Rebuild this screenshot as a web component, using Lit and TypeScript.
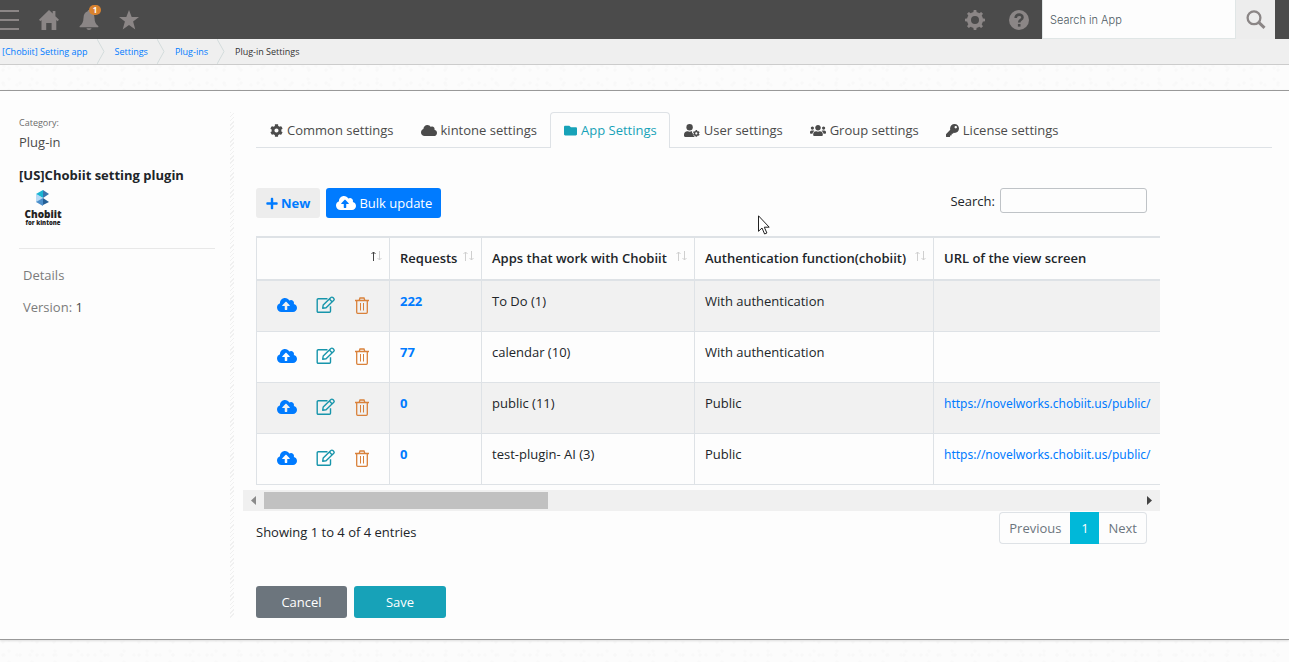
import { LitElement, html, css, svg } from "lit";
import { customElement, property, state } from "lit/decorators.js";
import { classMap } from "lit/directives/class-map.js";

const CLOUD =
  "M537.6 226.6c4.1-10.7 6.4-22.4 6.4-34.6 0-53-43-96-96-96-19.7 0-38.1 6-53.3 16.2C367 64.2 315.3 32 256 32c-88.4 0-160 71.6-160 160 0 2.7.1 5.4.2 8.1C40.2 219.8 0 273.2 0 336c0 79.5 64.5 144 144 144h368c70.7 0 128-57.3 128-128 0-61.9-44-113.6-102.4-125.4z";
const COG =
  "M487.4 315.7l-42.6-24.6c4.3-23.2 4.3-47 0-70.2l42.6-24.6c4.9-2.8 7.1-8.6 5.5-14-11.1-35.6-30-67.8-54.7-94.6-3.8-4.1-10-5.1-14.8-2.3L380.8 110c-17.9-15.4-38.5-27.3-60.8-35.1V25.8c0-5.6-3.9-10.5-9.4-11.7-36.7-8.2-74.3-7.8-109.2 0-5.5 1.2-9.4 6.1-9.4 11.7V75c-22.2 7.9-42.8 19.8-60.8 35.1L88.7 85.5c-4.9-2.8-11-1.9-14.8 2.3-24.7 26.7-43.6 58.9-54.7 94.6-1.7 5.4.6 11.2 5.5 14L67.3 221c-4.3 23.2-4.3 47 0 70.2l-42.6 24.6c-4.9 2.8-7.1 8.6-5.5 14 11.1 35.6 30 67.8 54.7 94.6 3.8 4.1 10 5.1 14.8 2.3l42.6-24.6c17.9 15.4 38.5 27.3 60.8 35.1v49.2c0 5.6 3.9 10.5 9.4 11.7 36.7 8.2 74.3 7.8 109.2 0 5.5-1.2 9.4-6.1 9.4-11.7v-49.2c22.2-7.9 42.8-19.8 60.8-35.1l42.6 24.6c4.9 2.8 11 1.9 14.8-2.3 24.7-26.7 43.6-58.9 54.7-94.6 1.5-5.5-.7-11.3-5.6-14.1zM256 336c-44.1 0-80-35.9-80-80s35.9-80 80-80 80 35.9 80 80-35.9 80-80 80z";

const ICONS: Record<string, { box: string; body: unknown }> = {
  cog: { box: "0 0 512 512", body: svg`<path d=${COG} />` },
  cloud: { box: "0 0 640 512", body: svg`<path d=${CLOUD} />` },
  upload: {
    box: "0 0 640 512",
    body: svg`<path fill-rule="evenodd" d=${
      CLOUD +
      "M393.4 288H328v112c0 8.8-7.2 16-16 16h-48c-8.8 0-16-7.2-16-16V288h-65.4c-14.3 0-21.4-17.2-11.3-27.3l105.4-105.4c6.2-6.2 16.4-6.2 22.6 0l105.4 105.4c10.1 10.1 2.9 27.3-11.3 27.3z"
    } />`,
  },
  folder: {
    box: "0 0 512 512",
    body: svg`<path d="M464 128H272l-64-64H48C21.49 64 0 85.49 0 112v288c0 26.51 21.49 48 48 48h416c26.51 0 48-21.49 48-48V176c0-26.51-21.49-48-48-48z" />`,
  },
  userCog: {
    box: "0 0 640 512",
    body: svg`<circle cx="224" cy="128" r="128" /><path d="M134 288C60 288 0 348 0 422v42c0 26 21 48 48 48h352c12 0 22-4 30-11-52-20-84-74-78-132-28-16-40-44-30-81h-25c-45 20-101 20-146 0z" /><g transform="translate(355 235) scale(.54)"><path d=${COG} /></g>`,
  },
  users: {
    box: "0 0 640 512",
    body: svg`<path d="M96 224c35.3 0 64-28.7 64-64s-28.7-64-64-64-64 28.7-64 64 28.7 64 64 64zm448 0c35.3 0 64-28.7 64-64s-28.7-64-64-64-64 28.7-64 64 28.7 64 64 64zm32 32h-64c-17.6 0-33.5 7.1-45.1 18.6 40.3 22.1 68.9 62 75.1 109.4h66c17.7 0 32-14.3 32-32v-32c0-35.3-28.7-64-64-64zm-256 0c61.9 0 112-50.1 112-112S381.9 32 320 32 208 82.1 208 144s50.1 112 112 112zm76.8 32h-8.3c-20.8 10-43.9 16-68.5 16s-47.6-6-68.5-16h-8.3C179.6 288 128 339.6 128 403.2V432c0 26.5 21.5 48 48 48h288c26.5 0 48-21.5 48-48v-28.8c0-63.6-51.6-115.2-115.2-115.2zm-223.7-13.4C161.5 263.1 145.6 256 128 256H64c-35.3 0-64 28.7-64 64v32c0 17.7 14.3 32 32 32h65.9c6.3-47.4 34.9-87.3 75.2-109.4z" />`,
  },
  key: {
    box: "0 0 512 512",
    body: svg`<path d="M512 176.001C512 273.203 433.202 352 336 352c-11.22 0-22.19-1.062-32.827-3.069l-24.012 27.014A23.999 23.999 0 0 1 261.223 384H224v40c0 13.255-10.745 24-24 24h-40v40c0 13.255-10.745 24-24 24H24c-13.255 0-24-10.745-24-24v-78.059c0-6.365 2.529-12.47 7.029-16.971l161.802-161.802C163.108 213.814 160 195.271 160 176 160 78.798 238.797.001 335.999 0 433.488-.001 512 78.511 512 176.001zM336 128c0 26.51 21.49 48 48 48s48-21.49 48-48-21.49-48-48-48-48 21.49-48 48z" />`,
  },
  plus: {
    box: "0 0 448 512",
    body: svg`<path d="M416 208H272V64c0-17.67-14.33-32-32-32h-32c-17.67 0-32 14.33-32 32v144H32c-17.67 0-32 14.33-32 32v32c0 17.67 14.33 32 32 32h144v144c0 17.67 14.33 32 32 32h32c17.67 0 32-14.33 32-32V304h144c17.67 0 32-14.33 32-32v-32c0-17.67-14.33-32-32-32z" />`,
  },
  edit: {
    box: "0 0 20 18",
    body: svg`<g fill="none" stroke="currentColor" stroke-width="1.4" stroke-linejoin="round"><path d="M11.500 2.700H2.200a1 1 0 0 0-1 1v11.500a1 1 0 0 0 1 1h11.300a1 1 0 0 0 1-1v-5" /><path d="M6.700 12.200l.5-3.200 7.700-7.500a1.400 1.400 0 0 1 2 0l.9.900a1.300 1.300 0 0 1 0 1.900l-7.700 7.500z" /><path d="M13.300 3l2.800 2.800" /></g>`,
  },
  trash: {
    box: "0 0 14 17",
    body: svg`<g fill="none" stroke="currentColor" stroke-width="1.300"><path d="M0 3.500h14M4.200 3.200l.8-2.200h4l.8 2.200M1.700 3.500v11.800c0 .6.300 1 1 1h8.600c.7 0 1-.4 1-1V3.500" /><path stroke-width="1" d="M5.500 6v7.500M8.500 6v7.500" /></g>`,
  },
  menu: { box: "0 0 19 20", body: svg`<path d="M0 0h19v2H0zM0 9h19v2H0zM0 18h19v2H0z" />` },
  home: {
    box: "0 0 20 20",
    body: svg`<path d="M10 0L0 9.700l1.300 1.500L2.500 10v10h4.700v-7h5.400v7h4.700V10l1.300 1.200L20 9.700l-3.600-3.500V1h-2.700v2.600z" />`,
  },
  bell: {
    box: "0 0 20 20",
    body: svg`<path d="M8.700 1.300c0-1.600 2.600-1.600 2.600 0 3 .9 4 3.300 4.200 6.700.2 4 1.200 6 3.700 8 .6.600.2 1.300-.5 1.300H1.300c-.7 0-1.100-.7-.5-1.300 2.500-2 3.500-4 3.700-8 .2-3.400 1.200-5.800 4.200-6.700zM7.500 18.200h5c-.3 2.300-4.700 2.300-5 0z" />`,
  },
  star: {
    box: "0 0 20 20",
    body: svg`<path d="M10 0l2.700 7H20l-5.900 4.500L16.300 19.500 10 15l-6.300 4.500 2.200-8L0 7h7.300z" />`,
  },
  gear: {
    box: "0 0 20 20",
    body: svg`<circle cx="10" cy="10" r="6" fill="none" stroke="currentColor" stroke-width="4" />${[0, 45, 90, 135, 180, 225, 270, 315].map(
      (a) => svg`<path transform="rotate(${a} 10 10)" d="M8.200 3L8.700 0h2.600l.5 3z" />`
    )}`,
  },
  help: {
    box: "0 0 20 20",
    body: svg`<circle cx="10" cy="10" r="10" /><g fill="none" stroke="#4b4b4b" stroke-width="2.600"><path d="M6.700 8c0-4.600 6.800-4.200 6.800-.6 0 2.400-3.300 2.500-3.300 5" /><path d="M10.200 14v2.600" /></g>`,
  },
  search: {
    box: "0 0 20 20",
    body: svg`<g fill="none" stroke="currentColor"><circle cx="8" cy="7.800" r="6.400" stroke-width="2.300" /><path d="M12.800 12.300l5.700 5.500" stroke-width="3" /></g>`,
  },
};

@customElement("ui-icon")
export class UiIcon extends LitElement {
  @property() name = "cog";

  static styles = css`
    :host {
      display: inline-flex;
      flex: none;
    }
    svg {
      width: 100%;
      height: 100%;
      fill: currentColor;
      overflow: visible;
    }
  `;

  render() {
    const icon = ICONS[this.name];
    return html`<svg viewBox=${icon.box} aria-hidden="true">${icon.body}</svg>`;
  }
}

interface AppRow {
  requests: number;
  app: string;
  auth: string;
  url: string;
}

const ROWS: AppRow[] = [
  { requests: 222, app: "To Do (1)", auth: "With authentication", url: "" },
  { requests: 77, app: "calendar (10)", auth: "With authentication", url: "" },
  { requests: 0, app: "public (11)", auth: "Public", url: "https://novelworks.chobiit.us/public/" },
  { requests: 0, app: "test-plugin- AI (3)", auth: "Public", url: "https://novelworks.chobiit.us/public/" },
];

const TABS = [
  { icon: "cog", label: "Common settings" },
  { icon: "cloud", label: "kintone settings" },
  { icon: "folder", label: "App Settings" },
  { icon: "userCog", label: "User settings" },
  { icon: "users", label: "Group settings" },
  { icon: "key", label: "License settings" },
];

@customElement("app-root")
export class AppRoot extends LitElement {
  @state() private tab = 2;

  static styles = css`
    :host {
      display: flex;
      flex-direction: column;
      min-height: 100vh;
      position: relative;
      overflow: hidden;
      font: 13px/20px "Open Sans", "Noto Sans", sans-serif;
      color: #212529;
      background-color: #fcfcfc;
      background-image: radial-gradient(circle at 3px 5px, #f8f8f8 1px, transparent 2px),
        radial-gradient(circle at 9px 2px, #f9f9f9 1px, transparent 2px),
        radial-gradient(circle at 4px 9px, #f9f9f9 1px, transparent 2px);
      background-size: 17px 13px, 23px 11px, 13px 19px;
    }
    *,
    *::before,
    *::after {
      box-sizing: border-box;
    }
    button,
    input {
      font: inherit;
      color: inherit;
      margin: 0;
    }
    button {
      border: 0;
      padding: 0;
      background: none;
      display: inline-flex;
      align-items: center;
      justify-content: center;
      white-space: nowrap;
    }
    a {
      color: #007bff;
      text-decoration: none;
    }
    .topbar {
      height: 39px;
      flex: none;
      display: flex;
      align-items: stretch;
      background: #4b4b4b;
      color: #8b8686;
      padding-right: 14px;
    }
    .shortcuts,
    .tools {
      display: flex;
      align-items: center;
      gap: 20px;
    }
    .shortcuts button,
    .tools button {
      position: relative;
    }
    .tools {
      margin-left: auto;
      gap: 24px;
      padding-right: 13px;
    }
    .glyph {
      width: 20px;
      height: 20px;
    }
    .glyph.menu {
      width: 19px;
    }
    .badge {
      position: absolute;
      right: -2px;
      top: -5px;
      width: 12px;
      height: 10px;
      border-radius: 5px;
      background: #d9822f;
      color: #fff;
      font-size: 8px;
      font-weight: 700;
      line-height: 10px;
    }
    .app-search {
      display: flex;
      width: 233px;
    }
    .app-search input {
      flex: 1;
      min-width: 0;
      border: 1px solid #e0e6e6;
      border-top: 0;
      border-radius: 0;
      padding: 2px 7px 0;
      background: #fdfdfd;
      font-family: Inter, "Liberation Sans", sans-serif;
      font-size: 11px;
      font-weight: 300;
      outline: 0;
    }
    .app-search input::placeholder {
      color: #4d5a62;
      opacity: 1;
    }
    .app-search button {
      width: 39px;
      background: #ededed;
    }
    .crumbs {
      height: 26px;
      flex: none;
      background: #efefef;
      border-bottom: 1px solid #ccc;
      font-size: 9px;
      line-height: 25px;
    }
    .crumbs ol {
      display: flex;
      list-style: none;
      margin: 0;
      padding: 0 0 0 2px;
    }
    .crumbs li {
      display: flex;
      color: #333;
    }
    .crumbs svg {
      width: 8px;
      height: 25px;
      margin: 0 10px 0 9px;
      fill: none;
      stroke: #d3dcdc;
      stroke-width: 1;
    }
    .panel {
      margin-top: 25px;
      padding: 21px 17px 21px 19px;
      display: grid;
      grid-template-columns: 196px minmax(0, 1fr);
      column-gap: 15px;
      background: #fdfdfd;
      border-top: 1px solid #999;
      border-bottom: 1px solid #999;
      box-shadow: 0 1px 2px #ddd;
    }
    .side {
      padding-top: 2px;
    }
    .side dl,
    .side dt,
    .side dd {
      margin: 0;
    }
    .side dt {
      font-size: 9px;
      line-height: 18px;
      color: #6b6b6b;
    }
    .side dd {
      color: #4b4b4b;
    }
    .side h1 {
      margin: 13px 0 5px;
      font-size: 13px;
      line-height: 20px;
    }
    .logo {
      display: block;
      width: 48px;
      height: 38px;
      font: 700 11px "Open Sans", sans-serif;
    }
    .meta {
      margin-top: 20px;
      padding: 16px 4px;
      border-top: 1px solid #e8e8e8;
      display: grid;
      gap: 12px;
      color: #7b7b7b;
    }
    .meta b {
      font-weight: 400;
      color: #4b4b4b;
    }
    .main {
      display: flex;
      min-width: 0;
    }
    .main::before {
      content: "";
      flex: none;
      width: 4px;
      margin-right: 22px;
      background: repeating-linear-gradient(135deg, #f0f0f0 0 1px, #fdfdfd 1px 3px);
    }
    .content {
      flex: 1;
      min-width: 0;
    }
    .tabs {
      display: flex;
      height: 36px;
      border-bottom: 1px solid #dee2e6;
    }
    .tab {
      height: 36px;
      padding: 0 12px 1px 13px;
      gap: 4px;
      border: 1px solid transparent;
      border-bottom: 0;
      border-radius: 4px 4px 0 0;
      color: #4b4b4b;
    }
    .tab.on {
      background: #fdfdfd;
      border-color: #dee2e6;
      color: #17a2b8;
    }
    .tab ui-icon {
      width: 13px;
      height: 13px;
    }
    .tab ui-icon.wide {
      width: 16px;
    }
    .body {
      margin-right: 112px;
    }
    .toolbar {
      display: flex;
      justify-content: space-between;
      align-items: flex-start;
      margin: 40px 13px 18px 0;
    }
    .actions {
      display: flex;
      gap: 6px;
    }
    .btn {
      height: 30px;
      padding: 0 9px 0 10px;
      gap: 3px;
      border-radius: 3px;
      background: #007bff;
      color: #fff;
    }
    .btn.new {
      padding: 0 10px;
      background: #ededed;
      color: #007bff;
      font-weight: 700;
    }
    .btn.new ui-icon {
      width: 12px;
      height: 13px;
    }
    .btn ui-icon {
      width: 20px;
      height: 16px;
    }
    .filter {
      display: flex;
      align-items: center;
      gap: 5px;
    }
    .filter input {
      width: 147px;
      height: 25px;
      border: 1px solid #bfc3c7;
      border-radius: 3px;
      background: #fdfdfd;
    }
    .clip {
      overflow: hidden;
    }
    table {
      width: 1800px;
      table-layout: fixed;
      border-collapse: separate;
      border-spacing: 0;
    }
    .c-act {
      width: 133px;
    }
    .c-req {
      width: 92px;
    }
    .c-app {
      width: 213px;
    }
    .c-auth {
      width: 239px;
    }
    th,
    td {
      text-align: left;
      vertical-align: top;
      border-left: 1px solid #dee2e6;
      white-space: nowrap;
    }
    th {
      height: 45px;
      padding: 10px 7px 0 10px;
      border-top: 2px solid #dee2e6;
      border-bottom: 2px solid #dee2e6;
      font-weight: 600;
    }
    .head {
      display: flex;
      justify-content: space-between;
    }
    .sort {
      width: 11px;
      height: 10px;
      margin: 3px 0;
      fill: none;
      stroke: #cfcfcf;
    }
    .first .head {
      justify-content: flex-end;
    }
    .sort .hot {
      stroke: #444;
    }
    td {
      height: 51px;
      padding: 10px;
      border-bottom: 1px solid #dee2e6;
    }
    .url {
      font-family: "Noto Sans", "Open Sans", sans-serif;
      font-size: 12px;
    }
    tbody tr:nth-child(odd) {
      background: #f1f1f1;
    }
    .count {
      font-weight: 700;
    }
    .row-actions {
      display: flex;
      align-items: center;
      padding: 5px 0 0 10px;
      gap: 19px;
    }
    .row-actions ui-icon {
      width: 20px;
      height: 18px;
    }
    .up {
      color: #007bff;
    }
    .ed {
      color: #1795ab;
    }
    .del {
      color: #d9813a;
    }
    .row-actions .up ui-icon {
      height: 16px;
    }
    .row-actions .del ui-icon {
      width: 14px;
      height: 17px;
    }
    .scroll {
      display: flex;
      align-items: center;
      height: 21px;
      margin: 5px 0 1px -13px;
      padding: 0 8px;
      background: #f0f0f0;
    }
    .scroll svg {
      width: 5px;
      height: 9px;
      fill: #8a8a8a;
    }
    .scroll .end {
      fill: #444;
    }
    .track {
      flex: 1;
      margin: 0 8px;
    }
    .thumb {
      width: 32.5%;
      height: 17px;
      background: #c1c1c1;
    }
    .foot {
      display: flex;
      justify-content: space-between;
      align-items: center;
      height: 32px;
      margin: 0 13px 42px 0;
    }
    .info {
      padding-top: 8px;
    }
    .pager {
      display: flex;
      height: 32px;
      color: #6c757d;
    }
    .pager button {
      padding: 0 9px;
      border: 1px solid #dee2e6;
    }
    .pager button:first-child {
      border-radius: 4px 0 0 4px;
      border-right: 0;
    }
    .pager button:last-child {
      border-radius: 0 4px 4px 0;
      border-left: 0;
    }
    .pager .current {
      width: 29px;
      background: #00b8d9;
      border-color: #00b8d9;
      color: #fff;
    }
    .submit {
      display: flex;
      gap: 7px;
    }
    .submit button {
      width: 92px;
      height: 32px;
      border-radius: 3px;
      background: #17a2b8;
      color: #fff;
    }
    .submit .cancel {
      width: 91px;
      background: #6c757d;
    }
    .cursor {
      position: absolute;
      left: 758px;
      top: 215px;
      width: 12px;
      height: 20px;
      pointer-events: none;
    }
  `;

  private crumb(label: string) {
    return html`<li>
      <a href="#">${label}</a>
      <svg viewBox="0 0 8 25" aria-hidden="true"><path d="M0 0L7 12.500L0 25" /></svg>
    </li>`;
  }

  private heading(label: string, hot = false) {
    return html`<div class="head">
      <span>${label}</span>
      <svg class="sort" viewBox="0 0 11 10" aria-hidden="true">
        <path class=${hot ? "hot" : ""} d="M2.500 10V1M.500 3L2.500 1L4.500 3" />
        <path d="M8.500 0V9M6.500 7L8.500 9L10.500 7" />
      </svg>
    </div>`;
  }

  private row(r: AppRow) {
    return html`<tr>
      <td>
        <div class="row-actions">
          <button class="up" aria-label="Update"><ui-icon name="upload"></ui-icon></button>
          <button class="ed" aria-label="Edit"><ui-icon name="edit"></ui-icon></button>
          <button class="del" aria-label="Delete"><ui-icon name="trash"></ui-icon></button>
        </div>
      </td>
      <td><a class="count" href="#">${r.requests}</a></td>
      <td>${r.app}</td>
      <td>${r.auth}</td>
      <td>${r.url ? html`<a class="url" href=${r.url}>${r.url}</a>` : ""}</td>
    </tr>`;
  }

  render() {
    return html`
      <header class="topbar">
        <div class="shortcuts">
          <button aria-label="Menu"><ui-icon class="glyph menu" name="menu"></ui-icon></button>
          <button aria-label="Home"><ui-icon class="glyph" name="home"></ui-icon></button>
          <button aria-label="Notifications">
            <ui-icon class="glyph" name="bell"></ui-icon><span class="badge">1</span>
          </button>
          <button aria-label="Favorites"><ui-icon class="glyph" name="star"></ui-icon></button>
        </div>
        <div class="tools">
          <button aria-label="Settings"><ui-icon class="glyph" name="gear"></ui-icon></button>
          <button aria-label="Help"><ui-icon class="glyph" name="help"></ui-icon></button>
        </div>
        <div class="app-search" role="search">
          <input type="text" aria-label="Search in App" placeholder="Search in App" />
          <button aria-label="Search"><ui-icon class="glyph" name="search"></ui-icon></button>
        </div>
      </header>

      <nav class="crumbs" aria-label="Breadcrumb">
        <ol>
          ${["[Chobiit] Setting app", "Settings", "Plug-ins"].map((c) => this.crumb(c))}
          <li aria-current="page">Plug-in Settings</li>
        </ol>
      </nav>

      <main class="panel">
        <aside class="side">
          <dl>
            <dt>Category:</dt>
            <dd>Plug-in</dd>
          </dl>
          <h1>[US]Chobiit setting plugin</h1>
          <svg class="logo" viewBox="0 0 48 38" role="img" aria-label="Chobiit for kintone">
            <path fill="#8fd0f5" d="M17 4v8l7-4z" />
            <path fill="#19b5d3" d="M17 4l7-4v8z" />
            <path fill="#3a75ad" d="M24 0l6 4-6 4z" />
            <path fill="#b6daf6" d="M17 4l7 4-7 4z" />
            <path fill="#4c8fcb" d="M17 12l7-4v8z" />
            <path fill="#245f96" d="M24 8l6 4-6 3z" />
            <text x="24" y="28" text-anchor="middle" font-size="10" font-weight="800" fill="#222">Chobiit</text>
            <text x="24" y="35" text-anchor="middle" font-size="6" font-weight="800" fill="#222">for kintone</text>
          </svg>
          <div class="meta">
            <span>Details</span>
            <span>Version: <b>1</b></span>
          </div>
        </aside>

        <section class="main">
          <div class="content">
            <div class="tabs" role="tablist">
              ${TABS.map(
                (t, i) => html`<button
                  role="tab"
                  aria-selected=${i === this.tab}
                  class=${classMap({ tab: true, on: i === this.tab })}
                  @click=${() => (this.tab = i)}
                >
                  <ui-icon
                    class=${classMap({ wide: ["cloud", "userCog", "users"].includes(t.icon) })}
                    name=${t.icon}
                  ></ui-icon>
                  ${t.label}
                </button>`
              )}
            </div>

            <div class="body">
              <div class="toolbar">
                <div class="actions">
                  <button class="btn new"><ui-icon name="plus"></ui-icon>New</button>
                  <button class="btn"><ui-icon name="upload"></ui-icon>Bulk update</button>
                </div>
                <label class="filter">Search: <input type="text" /></label>
              </div>

              <div class="clip">
                <table>
                  <colgroup>
                    <col class="c-act" />
                    <col class="c-req" />
                    <col class="c-app" />
                    <col class="c-auth" />
                    <col />
                  </colgroup>
                  <thead>
                    <tr>
                      <th class="first">${this.heading("", true)}</th>
                      <th>${this.heading("Requests")}</th>
                      <th>${this.heading("Apps that work with Chobiit")}</th>
                      <th>${this.heading("Authentication function(chobiit)")}</th>
                      <th>${this.heading("URL of the view screen")}</th>
                    </tr>
                  </thead>
                  <tbody>
                    ${ROWS.map((r) => this.row(r))}
                  </tbody>
                </table>
              </div>

              <div class="scroll">
                <svg viewBox="0 0 5 9" aria-hidden="true"><path d="M5 0v9L0 4.500z" /></svg>
                <div class="track"><div class="thumb"></div></div>
                <svg class="end" viewBox="0 0 5 9" aria-hidden="true"><path d="M0 0v9l5-4.500z" /></svg>
              </div>

              <div class="foot">
                <span class="info">Showing 1 to 4 of 4 entries</span>
                <div class="pager">
                  <button>Previous</button><button class="current">1</button><button>Next</button>
                </div>
              </div>
            </div>

            <div class="submit">
              <button class="cancel">Cancel</button>
              <button>Save</button>
            </div>
          </div>
        </section>
      </main>

      <svg class="cursor" viewBox="0 0 12 20" aria-hidden="true">
        <path
          d="M.500 .800V16.300L4 13l2.600 6 2.300-1-2.600-5.800h4.900z"
          fill="#fff"
          stroke="#222"
        />
      </svg>
    `;
  }
}
